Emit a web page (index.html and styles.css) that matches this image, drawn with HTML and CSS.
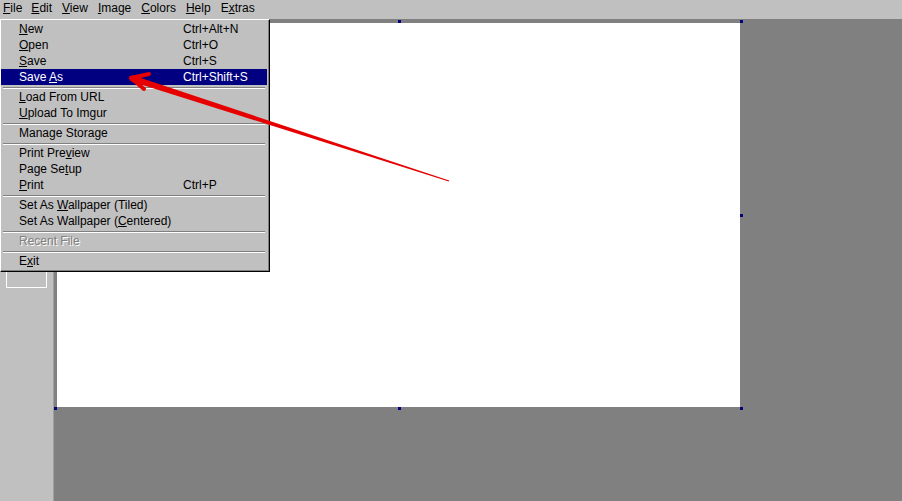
FILE: index.html
```html
<!DOCTYPE html>
<html lang="en">
<head>
  <meta charset="UTF-8" />
  <title>Paint</title>
  <link rel="stylesheet" href="styles.css">
</head>
<body>
  <div class="menubar">
    <span class="menu-button"><u>F</u>ile</span>
    <span class="menu-button"><u>E</u>dit</span>
    <span class="menu-button"><u>V</u>iew</span>
    <span class="menu-button"><u>I</u>mage</span>
    <span class="menu-button"><u>C</u>olors</span>
    <span class="menu-button"><u>H</u>elp</span>
    <span class="menu-button">E<u>x</u>tras</span>
  </div>

  <div class="workspace">
    <div class="toolbox">
      <div class="tool-options"></div>
    </div>
    <div class="canvas-area">
      <div class="canvas">
        <span class="handle" style="left:-3px;top:-3px"></span>
        <span class="handle" style="left:341px;top:-3px"></span>
        <span class="handle" style="left:683px;top:-3px"></span>
        <span class="handle" style="left:-3px;top:191px"></span>
        <span class="handle" style="left:683px;top:191px"></span>
        <span class="handle" style="left:-3px;top:384px"></span>
        <span class="handle" style="left:341px;top:384px"></span>
        <span class="handle" style="left:683px;top:384px"></span>
      </div>
    </div>
  </div>

  <!-- File menu, opened -->
  <div class="menu-popup">
    <div class="menu-item"><span><u>N</u>ew</span><span>Ctrl+Alt+N</span></div>
    <div class="menu-item"><span><u>O</u>pen</span><span>Ctrl+O</span></div>
    <div class="menu-item"><span><u>S</u>ave</span><span>Ctrl+S</span></div>
    <div class="menu-item active"><span>Save <u>A</u>s</span><span>Ctrl+Shift+S</span></div>
    <div class="menu-sep"></div>
    <div class="menu-item"><span><u>L</u>oad From URL</span><span></span></div>
    <div class="menu-item"><span><u>U</u>pload To Imgur</span><span></span></div>
    <div class="menu-sep"></div>
    <div class="menu-item"><span>Manage Storage</span><span></span></div>
    <div class="menu-sep"></div>
    <div class="menu-item"><span>Print Pre<u>v</u>iew</span><span></span></div>
    <div class="menu-item"><span>Page Se<u>t</u>up</span><span></span></div>
    <div class="menu-item"><span><u>P</u>rint</span><span>Ctrl+P</span></div>
    <div class="menu-sep"></div>
    <div class="menu-item"><span>Set As <u>W</u>allpaper (Tiled)</span><span></span></div>
    <div class="menu-item"><span>Set As Wallpaper (<u>C</u>entered)</span><span></span></div>
    <div class="menu-sep"></div>
    <div class="menu-item disabled"><span>Recent File</span><span></span></div>
    <div class="menu-sep"></div>
    <div class="menu-item"><span>E<u>x</u>it</span><span></span></div>
  </div>

  <!-- annotation arrow -->
  <svg class="annotation" width="902" height="501" viewBox="0 0 902 501">
    <polygon points="449.2,180.5 131.9,75.1 130.1,80.9 448.8,181.5" fill="#e60000"/>
    <line x1="131" y1="78" x2="149" y2="74" stroke="#e60000" stroke-width="4" stroke-linecap="round"/>
    <line x1="131" y1="78" x2="144" y2="89" stroke="#e60000" stroke-width="4" stroke-linecap="round"/>
  </svg>
</body>
</html>
```

FILE: styles.css
```css
html, body {
  margin: 0;
  width: 902px;
  height: 501px;
  overflow: hidden;
}

body {
  position: relative;
  display: flex;
  flex-direction: column;
  font-family: "Liberation Sans", Arial, sans-serif;
  font-size: 12px;
  color: #000;
  background: #c0c0c0;
}

.menubar {
  height: 19px;
  display: flex;
  gap: 4px;
  background: #c0c0c0;
}

.menu-button {
  padding: 0 3px;
  line-height: 17px;
}

.menu-button:first-child {
  padding-right: 2px;
}

.workspace {
  flex: 1;
  display: flex;
}

.toolbox {
  width: 54px;
  border-right: 1px solid #a0a0a0;
  background: #c0c0c0;
  padding: 203px 0 0 6px;
  box-sizing: border-box;
  flex-shrink: 0;
}

.tool-options {
  width: 41px;
  height: 66px;
  box-sizing: border-box;
  border: 1px solid #fff;
  border-top-color: #808080;
}

.canvas-area {
  flex: 1;
  background: #808080;
  padding: 4px 0 0 3px;
}

.canvas {
  position: relative;
  width: 683px;
  height: 384px;
  background: #fff;
}

.handle {
  position: absolute;
  width: 3px;
  height: 3px;
  background: #000080;
}

.menu-popup {
  position: absolute;
  left: 0;
  top: 19px;
  width: 270px;
  box-sizing: border-box;
  padding: 1px 2px 2px 0;
  background: #c0c0c0;
  border: 1px solid;
  border-color: #fff #000 #000 #fff;
  box-shadow: inset -1px -1px #808080;
  z-index: 5;
}

.menu-item {
  display: grid;
  grid-template-columns: 164px 1fr;
  height: 16px;
  line-height: 16px;
  padding-left: 18px;
  white-space: nowrap;
}

.menu-item.active {
  background: #000080;
  color: #fff;
}

.menu-item.disabled {
  color: #808080;
  text-shadow: 1px 1px 0 #fff;
}

.menu-sep {
  margin: 2px 2px 0 2px;
  height: 0;
  border-top: 1px solid #808080;
  border-bottom: 1px solid #fff;
}

.annotation {
  position: absolute;
  left: 0;
  top: 0;
  pointer-events: none;
  z-index: 10;
}
```
